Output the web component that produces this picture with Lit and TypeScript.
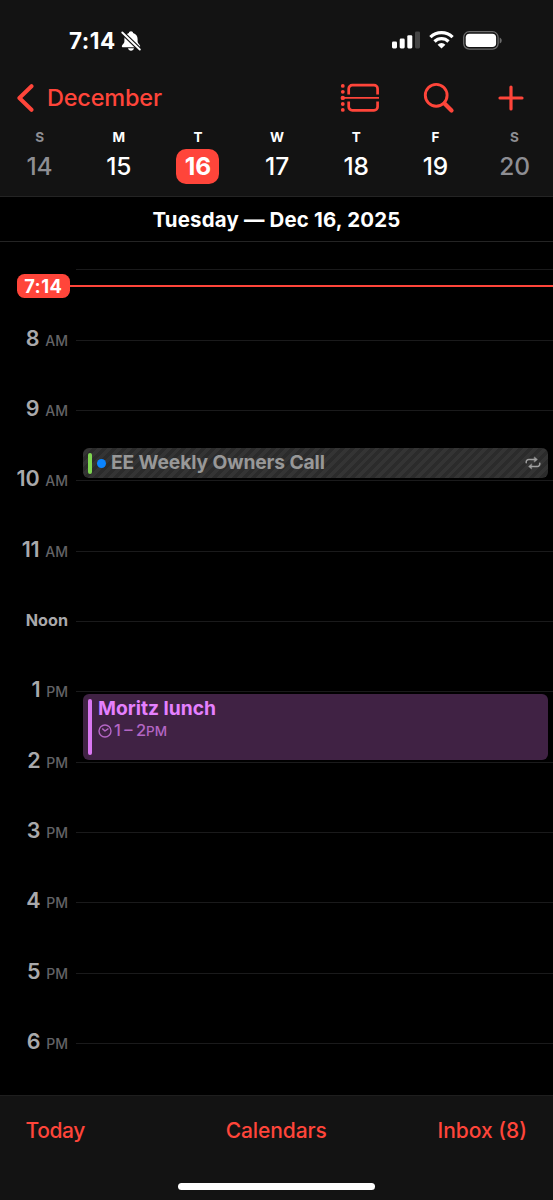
import { LitElement, html, css, svg, nothing } from "lit";
import { customElement, property } from "lit/decorators.js";

const RED = "#ff453a";

const bellSlash = svg`
  <svg width="20" height="22" viewBox="0 0 20 22">
    <path fill="#fff" d="M10 1.200c-1.200 0-2 .8-2.100 1.700C5 3.800 3.400 6.100 3.400 9v2.600c0 1.700-1.900 2.700-2.500 4.200-.3.900.2 1.500 1.200 1.500h15.800c1 0 1.500-.6 1.200-1.500-.6-1.500-2.500-2.500-2.500-4.200V9c0-2.900-1.600-5.200-4.500-6.100C12 2 11.200 1.200 10 1.200z"/>
    <path fill="#fff" d="M7 18.300h6c-.3 1.400-1.500 2.400-3 2.400s-2.700-1-3-2.400z"/>
    <path stroke="#131313" stroke-width="4.200" d="M0 1.200L20 20.700"/>
    <path stroke="#fff" stroke-width="1.900" stroke-linecap="round" d="M1.300 2.500L18.800 19.500"/>
  </svg>`;

const signal = svg`
  <svg width="28" height="18" viewBox="0 0 28 18">
    <rect x="0" y="10.600" width="5" height="6.800" rx="1.300" fill="#fff"/>
    <rect x="7.700" y="7.600" width="5" height="9.800" rx="1.300" fill="#fff"/>
    <rect x="15.300" y="4.200" width="5" height="13.200" rx="1.300" fill="#fff"/>
    <rect x="23" y="0.600" width="5" height="16.800" rx="1.300" fill="#454545"/>
  </svg>`;

const wifi = svg`
  <svg width="25" height="18" viewBox="0 0 25 18">
    <g fill="none" stroke="#fff" stroke-width="3.200">
      <path d="M1.400 6.200a15.800 15.800 0 0 1 22.200 0"/>
      <path d="M5.500 10.500a9.900 9.900 0 0 1 14 0"/>
    </g>
    <path fill="#fff" d="M12.500 17.600l-3.900-3.900a5.600 5.600 0 0 1 7.800 0z"/>
  </svg>`;

const battery = svg`
  <svg width="39" height="19" viewBox="0 0 39 19">
    <rect x="0.700" y="0.700" width="34.400" height="17.400" rx="5.600" fill="none" stroke="#6c6c6c" stroke-width="1.300"/>
    <rect x="2.700" y="2.700" width="30.400" height="13.400" rx="3.800" fill="#fff"/>
    <path d="M36.700 6.400c1.200.4 2 1.600 2 3s-.8 2.600-2 3z" fill="#6c6c6c"/>
  </svg>`;

const chevron = svg`
  <svg width="18" height="30" viewBox="0 0 18 30" fill="none" stroke=${RED} stroke-width="4" stroke-linecap="round" stroke-linejoin="round">
    <path d="M14.500 3.200L2.400 15l12.100 11.800"/>
  </svg>`;

const dayView = svg`
  <svg width="40" height="30" viewBox="0 0 40 30" fill="none" stroke=${RED} stroke-width="2.700" stroke-linecap="butt">
    <path d="M8.700 11.400V5.800a3.600 3.600 0 0 1 3.600-3.600h21.700a3.600 3.600 0 0 1 3.600 3.600v5.600"/>
    <path d="M8.700 18.400v5.300a3.600 3.600 0 0 0 3.600 3.600h21.700a3.600 3.600 0 0 0 3.600-3.600v-5.300"/>
    <path d="M3 14.900h36" stroke-width="1.800"/>
    <g fill=${RED} stroke="none">
      <circle cx="2.800" cy="2.900" r="1.900"/><circle cx="2.800" cy="8.800" r="1.900"/>
      <circle cx="2.800" cy="14.900" r="2.200"/>
      <circle cx="2.800" cy="21" r="1.900"/><circle cx="2.800" cy="26.900" r="1.900"/>
    </g>
  </svg>`;

const search = svg`
  <svg width="32" height="32" viewBox="0 0 32 32" fill="none" stroke=${RED} stroke-linecap="round">
    <circle cx="13.200" cy="13.300" r="10.900" stroke-width="2.900"/>
    <path d="M21.500 21.600l7 7" stroke-width="4.200"/>
  </svg>`;

const plus = svg`
  <svg width="26" height="26" viewBox="0 0 26 26" stroke=${RED} stroke-width="3.200" stroke-linecap="round">
    <path d="M13 2v22M2 13h22"/>
  </svg>`;

const repeat = svg`
  <svg width="16" height="14" viewBox="0 0 16 14" fill="none" stroke="#a0a0a0" stroke-width="1.500" stroke-linecap="round" stroke-linejoin="round">
    <path d="M1.200 6.800V6a2.500 2.500 0 0 1 2.500-2.500h6.500"/>
    <path d="M14.800 7.200V8a2.500 2.500 0 0 1-2.500 2.500H5.800"/>
    <path d="M9.600 1.200l2.800 2.300-2.800 2.300zM6.400 8.200l-2.800 2.300 2.800 2.300z" fill="#a0a0a0" stroke-width=".6"/>
  </svg>`;

const clock = svg`
  <svg width="14" height="14" viewBox="0 0 14 14" fill="none" stroke="#b466c4" stroke-width="1.400" stroke-linecap="round" stroke-linejoin="round">
    <circle cx="7" cy="7" r="6"/>
    <path d="M4.600 4.900L7 7l3-2.100"/>
  </svg>`;

interface Day { letter: string; date: number; kind?: string }

const DAYS: Day[] = [
  { letter: "S", date: 14, kind: "weekend" },
  { letter: "M", date: 15 },
  { letter: "T", date: 16, kind: "selected" },
  { letter: "W", date: 17 },
  { letter: "T", date: 18 },
  { letter: "F", date: 19 },
  { letter: "S", date: 20, kind: "weekend" },
];

const HOURS: [string, string][] = [
  ["", ""], ["8", "AM"], ["9", "AM"], ["10", "AM"], ["11", "AM"], ["Noon", ""],
  ["1", "PM"], ["2", "PM"], ["3", "PM"], ["4", "PM"], ["5", "PM"], ["6", "PM"],
];

@customElement("status-bar")
export class StatusBar extends LitElement {
  static styles = css`
    :host { display: flex; justify-content: space-between; height: 22px; padding: 30px 51px 0 69px; }
    .left, .right { display: flex; align-items: center; }
    .time { font-size: 22.500px; line-height: 22px; font-weight: 700; color: #fff; letter-spacing: 0.450px; width: 52px; white-space: nowrap; }
    .right { gap: 9px; height: 20px; }
    svg { display: block; }
  `;
  render() {
    return html`
      <div class="left"><span class="time">7:14</span>${bellSlash}</div>
      <div class="right">${signal}${wifi}${battery}</div>`;
  }
}

@customElement("week-strip")
export class WeekStrip extends LitElement {
  static styles = css`
    :host { display: grid; grid-template-columns: repeat(7, 79.170px); }
    .day { display: flex; flex-direction: column; align-items: center; color: #fff; }
    .letter { font-size: 13.500px; line-height: 16px; font-weight: 700; }
    .date {
      margin-top: 4px; width: 43px; height: 35px; line-height: 35px; border-radius: 10px;
      text-align: center; font-size: 24.500px; font-weight: 500; letter-spacing: -0.1px;
    }
    .weekend { color: #8e8e93; }
    .selected .date { background: #ff453a; font-weight: 700; }
  `;
  render() {
    return DAYS.map((d) => html`
      <div class="day ${d.kind ?? ""}">
        <span class="letter">${d.letter}</span>
        <span class="date">${d.date}</span>
      </div>`);
  }
}

@customElement("hour-row")
export class HourRow extends LitElement {
  @property() hour = "";
  @property() period = "";
  static styles = css`
    :host { display: grid; grid-template-columns: 68px 1fr; column-gap: 8px; align-items: center; height: 70.340px; }
    .label { display: flex; justify-content: flex-end; align-items: baseline; gap: 6px; line-height: 24px; margin-top: -2px; }
    .hour { font-size: 21.500px; font-weight: 600; color: #a9a9ab; letter-spacing: -0.3px; }
    .period { font-size: 14px; font-weight: 500; color: #636366; }
    .noon { font-size: 16.200px; font-weight: 700; color: #a9a9ab; margin-top: -2px; }
    .line { height: 1px; background: #1a1a1b; }
  `;
  render() {
    return html`
      <div class="label">
        <span class=${this.hour === "Noon" ? "noon" : "hour"}>${this.hour}</span>
        ${this.period ? html`<span class="period">${this.period}</span>` : nothing}
      </div>
      <div class="line"></div>`;
  }
}

@customElement("app-root")
export class AppRoot extends LitElement {
  static styles = css`
    :host {
      display: flex; flex-direction: column; box-sizing: border-box; width: 553px; height: 1200px;
      overflow: hidden; background: #000; color: #fff; font-family: Inter, "Liberation Sans", sans-serif;
    }
    svg { display: block; }
    .top { height: 196px; background: #131313; border-bottom: 1px solid #242424; }
    .nav { display: flex; align-items: center; height: 32px; margin-top: 30px; padding: 0 29px 0 17px; color: #ff453a; }
    .back { font-size: 23.500px; line-height: 30px; font-weight: 500; margin-left: 12px; flex: 1; letter-spacing: -0.2px; }
    .tools { display: flex; align-items: center; }
    .tools .search { margin: 0 43px 0 43px; }
    week-strip { margin-top: 15px; }
    .title {
      height: 44px; line-height: 45px; border-bottom: 1px solid #242424; text-align: center;
      font-size: 20.400px; font-weight: 700; letter-spacing: 0.200px;
    }
    .title span { white-space: nowrap; }
    .timeline { position: relative; flex: 1; overflow: hidden; }
    .hours { margin-top: -7.200px; }
    .now { position: absolute; left: 17px; right: 0; top: 32px; height: 24px; display: flex; align-items: center; }
    .pill { width: 52.500px; height: 24px; border-radius: 7.500px; background: #ff453a; font-size: 18.300px; line-height: 24px; font-weight: 700; text-align: center; letter-spacing: 0.450px; }
    .rule { flex: 1; height: 2.500px; background: #ff453a; }
    .event { position: absolute; left: 83px; right: 5px; box-sizing: border-box; border-radius: 6px; display: flex; }
    .bar { width: 4px; border-radius: 2px; }
    .call {
      top: 206px; height: 30px; align-items: center; padding: 0 7px 0 5px;
      background: repeating-linear-gradient(135deg, #2b2b2b 0 3.500px, #343434 3.500px 7px);
    }
    .call .bar { height: 21px; background: #7fd651; }
    .dot { width: 9px; height: 9px; border-radius: 50%; background: #0a84ff; margin: 0 5px 0 5px; }
    .name { font-size: 19.250px; line-height: 24px; font-weight: 700; white-space: nowrap; }
    .call .name { flex: 1; color: #989898; margin-top: -2px; letter-spacing: -0.120px; }
    .lunch { top: 452px; height: 66px; background: #402244; padding: 5px; }
    .lunch .bar { background: #da77f2; }
    .info { margin-left: 6px; margin-top: -3px; color: #e580ff; }
    .when { display: flex; align-items: center; color: #b466c4; font-size: 16.500px; line-height: 20px; font-weight: 500; }
    .when .range { margin-left: 2px; white-space: nowrap; word-spacing: -1px; }
    .when .suffix { font-size: 13.500px; }
    .bottom { height: 104px; background: #131313; border-top: 1px solid #1e1e1e; }
    .tabs { display: grid; grid-template-columns: 1fr auto 1fr; height: 68px; align-items: center; padding: 0 26px 0 25.500px; color: #ff453a; font-size: 21px; font-weight: 500; }
    .tabs span { letter-spacing: -0.1px; }
    .tabs span:first-child { letter-spacing: -0.4px; }
    .tabs span:last-child { text-align: right; letter-spacing: 0; }
    .home { width: 197px; height: 7px; border-radius: 4px; background: #fff; margin: 19px auto 0; }
  `;
  render() {
    return html`
      <div class="top">
        <status-bar></status-bar>
        <div class="nav">
          ${chevron}<span class="back">December</span>
          <div class="tools">${dayView}<div class="search">${search}</div>${plus}</div>
        </div>
        <week-strip></week-strip>
      </div>
      <div class="title"><span>Tuesday — Dec 16, 2025</span></div>
      <div class="timeline">
        <div class="hours">
          ${HOURS.map(([h, p]) => html`<hour-row .hour=${h} .period=${p}></hour-row>`)}
        </div>
        <div class="now"><span class="pill">7:14</span><span class="rule"></span></div>
        <div class="event call">
          <span class="bar"></span><span class="dot"></span>
          <span class="name">EE Weekly Owners Call</span>${repeat}
        </div>
        <div class="event lunch">
          <span class="bar"></span>
          <div class="info">
            <div class="name">Moritz lunch</div>
            <div class="when">${clock}<span class="range">1 – 2<span class="suffix">PM</span></span></div>
          </div>
        </div>
      </div>
      <div class="bottom">
        <div class="tabs"><span>Today</span><span>Calendars</span><span>Inbox (8)</span></div>
        <div class="home"></div>
      </div>`;
  }
}
